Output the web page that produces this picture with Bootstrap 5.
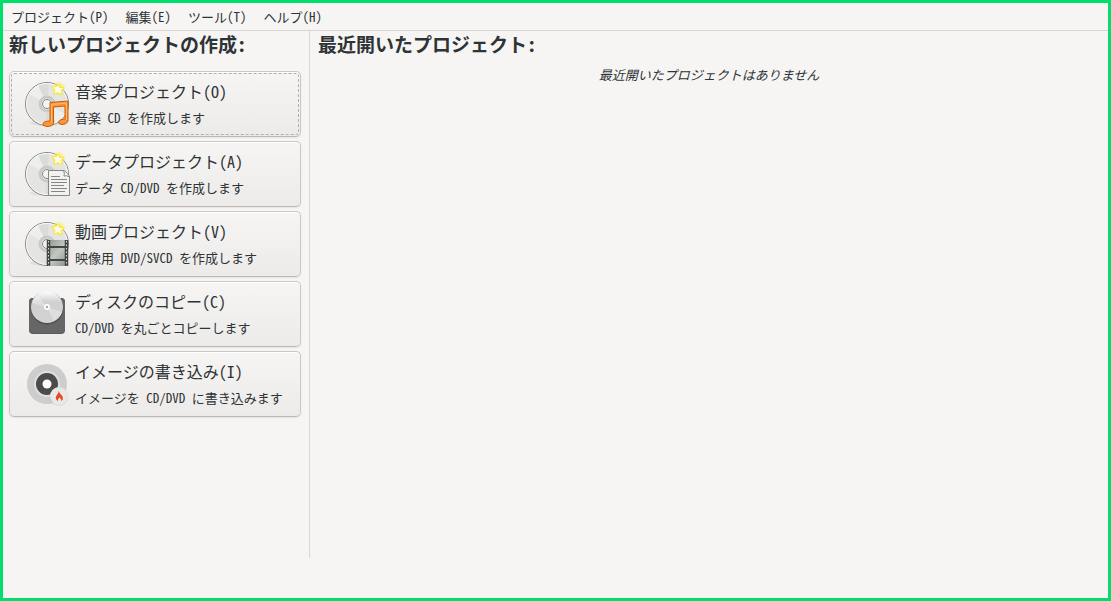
<!DOCTYPE html>
<html lang="ja">
<head>
<meta charset="utf-8">
<meta name="viewport" content="width=device-width, initial-scale=1">
<title>プロジェクト</title>
<link href="https://cdn.jsdelivr.net/npm/bootstrap@5.3.0/dist/css/bootstrap.min.css" rel="stylesheet">
<style>
  body {
    font-family: "Noto Sans CJK JP", "Noto Sans", sans-serif;
    font-feature-settings: "hwid";
    font-size: 13px;
    line-height: 20px;
    color: #2e3436;
    background: #f6f5f4;
    border: 3px solid #00df6c;
  }
  .menu-bar { height: 28px; padding: 0 8px; gap: 17px; border-bottom: 1px solid #d9d7d5; }
  .menu-bar button { font: inherit; font-feature-settings: inherit; color: inherit; line-height: 20px; }
  .create-pane { width: 307px; padding: 0 8px 0 6px; border-right: 1px solid #d9d7d5; }
  .recent-pane { padding: 0 8px; }
  .pane-title { font-size: 19px; font-weight: 700; line-height: 26px; margin: 0; }
  .create-list { gap: 4px; margin-top: 14px; }
  .task {
    height: 66px;
    padding: 0 14px;
    gap: 3px;
    font-feature-settings: inherit;
    color: inherit;
    text-align: left;
    border: 1px solid #cdc7c2;
    border-bottom-color: #bfb8b1;
    border-radius: 5px;
    background: linear-gradient(#f6f5f4, #edebe9);
    box-shadow: 0 1px 2px rgba(0, 0, 0, .07), inset 0 1px #fff;
  }
  .task.current { outline: 1px dashed #b0afad; outline-offset: -3px; }
  .task svg { width: 48px; height: 48px; }
  .task-name { font-size: 16px; line-height: 26px; }
  .task-note { font-size: 13px; line-height: 27px; }
  .status-area { height: 40px; }
</style>
</head>
<body class="d-flex flex-column min-vh-100">

<svg width="0" height="0" class="position-absolute" aria-hidden="true">
  <defs>
    <linearGradient id="film" x1="0" y1="0" x2="1" y2="1">
      <stop offset="0" stop-color="#8f948e"/><stop offset=".5" stop-color="#c4c8c3"/><stop offset="1" stop-color="#878c86"/>
    </linearGradient>
    <linearGradient id="shine" x1="0" y1="0" x2="0" y2="1">
      <stop offset="0" stop-color="#fff"/><stop offset=".35" stop-color="#d0d0d0"/><stop offset="1" stop-color="#d3d3d3"/>
    </linearGradient>
    <radialGradient id="glow">
      <stop offset="0" stop-color="#fce94f"/><stop offset=".6" stop-color="#fce94f" stop-opacity=".6"/><stop offset="1" stop-color="#fce94f" stop-opacity="0"/>
    </radialGradient>
    <g id="disc">
      <ellipse cx="23" cy="43" rx="17" ry="3" fill="#000" opacity=".06"/>
      <circle cx="23" cy="24" r="21.5" fill="#e4e5e3" stroke="#858783"/>
      <path d="M23 24 5 14A21 21 0 0 1 14 5ZM23 24 41 34A21 21 0 0 1 32 43Z" fill="#eeefed"/>
      <path d="M23 24 14 5A21 21 0 0 1 25 3ZM23 24 32 43A21 21 0 0 1 21 45Z" fill="#dadcd9"/>
      <circle cx="23" cy="24" r="20.5" fill="none" stroke="#f8f8f7"/>
      <circle cx="23" cy="24" r="8.5" fill="#c9cbc8"/>
      <circle cx="23" cy="24" r="5.5" fill="#eeeeec"/>
      <circle cx="23" cy="24" r="4.5" fill="#f6f5f4" stroke="#858783"/>
      <circle cx="34.500" cy="8.500" r="7.500" fill="url(#glow)"/>
      <path d="m34 4 1.500 3.500 4.500 0-3 3 1 4.500-4-2.500-4 2 1-4.500-3-3 4.500-.5z" fill="#fffef0" stroke="#f9e636" stroke-linejoin="round"/>
    </g>
  </defs>
</svg>

<nav class="menu-bar d-flex align-items-center" aria-label="メニュー">
  <button type="button" class="btn p-0 border-0">プロジェクト(P)</button>
  <button type="button" class="btn p-0 border-0">編集(E)</button>
  <button type="button" class="btn p-0 border-0">ツール(T)</button>
  <button type="button" class="btn p-0 border-0">ヘルプ(H)</button>
</nav>

<main class="d-flex flex-grow-1">
  <section class="create-pane flex-shrink-0">
    <h1 class="pane-title">新しいプロジェクトの作成:</h1>
    <div class="create-list d-flex flex-column">
      <button type="button" class="task current btn d-flex align-items-center">
        <svg viewBox="0 0 48 48" aria-hidden="true">
          <use href="#disc"/>
          <path d="M26 22.500 44 21V41Q43 44.500 38 44.500 34 44 34.500 41.500 36 39 41 39V26L29.500 27V43Q29 46.500 23 46.500 18 46 19 43.500 20 41 26 41Z" fill="#f9953b" stroke="#ce5c00" stroke-linejoin="round"/>
          <path d="M27 24.500 43 23M27.500 25V42M42.500 24V40" fill="none" stroke="#fdbd7a"/>
        </svg>
        <span class="d-flex flex-column"><span class="task-name">音楽プロジェクト(O)</span><span class="task-note">音楽 CD を作成します</span></span>
      </button>
      <button type="button" class="task btn d-flex align-items-center">
        <svg viewBox="0 0 48 48" aria-hidden="true">
          <use href="#disc"/>
          <path d="M24.500 20.500H40.500L45.500 26V45.500H24.500Z" fill="#f2f2f1" stroke="#858783"/>
          <path d="M39.500 20.500Q41 23 40 26 43 25 45.500 27" fill="#fff" stroke="#858783"/>
          <path d="M27 26.500H36M27 29.500H43M27 32.500H43M27 35.500H40M27 38.500H43M27 41.500H41" stroke="#858783"/>
        </svg>
        <span class="d-flex flex-column"><span class="task-name">データプロジェクト(A)</span><span class="task-note">データ CD/DVD を作成します</span></span>
      </button>
      <button type="button" class="task btn d-flex align-items-center">
        <svg viewBox="0 0 48 48" aria-hidden="true">
          <use href="#disc"/>
          <path d="M23 20H44V46H23Z" fill="url(#film)"/>
          <path d="M24.500 20V46M42.500 20V46" stroke="#444843" stroke-width="3.500"/>
          <path d="M26 27H41M26 40H41" stroke="#444843" stroke-width="2"/>
          <path d="M24.500 21V46M42.500 21V46" stroke="#d7dad5" stroke-dasharray="1.500 2"/>
        </svg>
        <span class="d-flex flex-column"><span class="task-name">動画プロジェクト(V)</span><span class="task-note">映像用 DVD/SVCD を作成します</span></span>
      </button>
      <button type="button" class="task btn d-flex align-items-center">
        <svg viewBox="0 0 48 48" aria-hidden="true">
          <rect x="5" y="8" width="36" height="36" rx="4" fill="#5b5b5b"/>
          <rect x="5" y="8" width="36" height="35" rx="4" fill="#666"/>
          <circle cx="23" cy="18" r="16.500" fill="#505050"/>
          <circle cx="23" cy="17" r="16" fill="url(#shine)"/>
          <path d="M7 17A16 16 0 0 1 39 17 16 16 0 0 0 7 17Z" fill="#f6f5f4" opacity=".3"/>
          <path d="M23 17 8 13A16 16 0 0 1 13 5ZM23 17 38 22A16 16 0 0 1 30 31Z" fill="#fff" opacity=".3"/>
          <circle cx="23" cy="17" r="3" fill="#fff"/><circle cx="23" cy="17" r="1.300" fill="#aaa"/>
        </svg>
        <span class="d-flex flex-column"><span class="task-name">ディスクのコピー(C)</span><span class="task-note">CD/DVD を丸ごとコピーします</span></span>
      </button>
      <button type="button" class="task btn d-flex align-items-center">
        <svg viewBox="0 0 48 48" aria-hidden="true">
          <circle cx="23" cy="24" r="20" fill="#cdcdcd"/>
          <circle cx="23" cy="24" r="13" fill="#e0e0e0"/>
          <circle cx="23" cy="24" r="11" fill="#4b4b4b"/>
          <circle cx="23" cy="24" r="4.500" fill="#fff"/>
          <circle cx="35" cy="36.500" r="9.500" fill="#000" opacity=".07"/>
          <circle cx="35" cy="36" r="9" fill="#e8e8e8"/>
          <path d="M34.500 31Q36 34 38 35.500 40 39 37.500 41 37 38 35.500 37.500 33.500 39 34 41 30.500 39 32.500 35.500 35 33 34.500 31Z" fill="#ea4a22"/>
        </svg>
        <span class="d-flex flex-column"><span class="task-name">イメージの書き込み(I)</span><span class="task-note">イメージを CD/DVD に書き込みます</span></span>
      </button>
    </div>
  </section>
  <section class="recent-pane flex-grow-1">
    <h2 class="pane-title">最近開いたプロジェクト:</h2>
    <p class="fst-italic text-center mt-2 mb-0">最近開いたプロジェクトはありません</p>
  </section>
</main>
<footer class="status-area"></footer>

<script src="https://cdn.jsdelivr.net/npm/bootstrap@5.3.0/dist/js/bootstrap.bundle.min.js"></script>
</body>
</html>
